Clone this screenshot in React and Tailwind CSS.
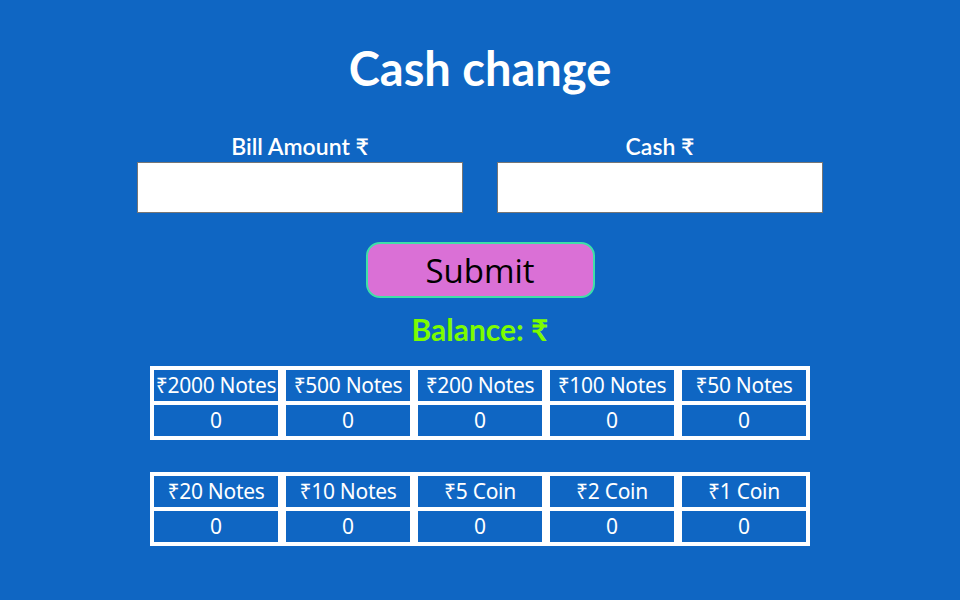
const ROW1 = ['₹2000 Notes', '₹500 Notes', '₹200 Notes', '₹100 Notes', '₹50 Notes']
const ROW2 = ['₹20 Notes', '₹10 Notes', '₹5 Coin', '₹2 Coin', '₹1 Coin']

function NotesTable({ labels, className }) {
  return (
    <div className={'w-[660px] bg-white p-1 grid grid-cols-5 gap-x-2 gap-y-1 ' + className}>
      {labels.map((l) => (
        <div key={l} className="h-[31px] bg-[#0f66c3] flex items-center justify-center text-white text-[21px] whitespace-nowrap tracking-[-0.3px]">
          {l}
        </div>
      ))}
      {labels.map((l) => (
        <div key={l + '-n'} className="h-[31px] bg-[#0f66c3] flex items-center justify-center text-white text-[21px]">
          0
        </div>
      ))}
    </div>
  )
}

export default function App() {
  return (
    <div className="w-full h-screen bg-[#0f66c3] flex flex-col items-center overflow-hidden font-['Noto_Sans',sans-serif]">
      <h1 className="mt-[40px] text-[47px] leading-[56px] font-bold text-white font-['Lato',sans-serif]">Cash change</h1>

      <div className="mt-[36px] flex gap-[34px]">
        <div className="w-[326px] flex flex-col items-center">
          <label className="text-[23px] leading-[28px] font-semibold text-white font-['Lato',sans-serif] mb-[2px]">Bill Amount ₹</label>
          <input className="w-full h-[51px] bg-white border border-[#767676] outline-none" />
        </div>
        <div className="w-[326px] flex flex-col items-center">
          <label className="text-[23px] leading-[28px] font-semibold text-white font-['Lato',sans-serif] mb-[2px]">Cash ₹</label>
          <input className="w-full h-[51px] bg-white border border-[#767676] outline-none" />
        </div>
      </div>

      <button className="mt-[29px] w-[229px] h-[56px] rounded-[14px] bg-[#da70d6] border-2 border-[#3ee0a8] text-black text-[33px] font-['Open_Sans',sans-serif] leading-none">
        Submit
      </button>

      <div className="mt-[14px] text-[30px] leading-[34px] font-bold text-[#7cfc00] font-['Lato',sans-serif]">Balance: ₹</div>

      <NotesTable labels={ROW1} className="mt-[20px]" />
      <NotesTable labels={ROW2} className="mt-[32px]" />
    </div>
  )
}
